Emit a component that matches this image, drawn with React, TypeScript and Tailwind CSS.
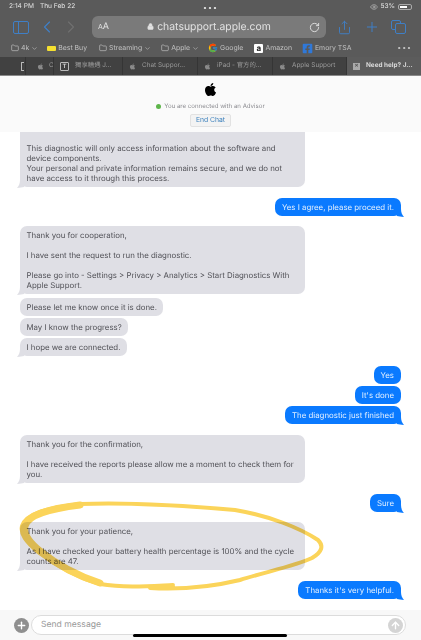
import React from 'react';
import { ChevronLeft, ChevronRight, ChevronDown, Lock, RotateCw, Share, Plus, Folder, ArrowUp, Eye } from 'lucide-react';
import { FaApple, FaFacebookSquare } from 'react-icons/fa';
import { FcGoogle } from 'react-icons/fc';

const sans = "font-['Inter','Noto_Sans_CJK_TC',sans-serif] [text-rendering:geometricPrecision]";

function Tail({ side, color }: { side: 'left' | 'right'; color: string }) {
  return (
    <svg
      width="7"
      height="8"
      viewBox="0 0 7 8"
      className={`absolute bottom-[-1px] ${side === 'left' ? 'left-[-3px] -scale-x-100' : 'right-[-3px]'}`}
      fill={color}
    >
      <path d="M0 0 H4 C4 3 5 6 7 8 C4 8 2 7 0 7 Z" />
    </svg>
  );
}

function Bubble({ lines, tail, className = '' }: { lines: string[]; tail?: boolean; className?: string }) {
  return (
    <div className={`relative rounded-[7px] bg-[#dfdfe5] px-[6.5px] py-1 text-[7.85px] leading-[10px] text-[#505056] ${className}`}>
      {lines.map((l, i) => (
        <div key={i} className="min-h-[10px] whitespace-nowrap">{l}</div>
      ))}
      {tail && <Tail side="left" color="#dfdfe5" />}
    </div>
  );
}

function Mine({ text, tail, className = '' }: { text: string; tail?: boolean; className?: string }) {
  return (
    <div className={`relative ml-auto mr-[20px] w-fit rounded-[7px] bg-[#0a7aff] px-[7px] py-1 text-[7.85px] leading-[10px] text-[#e4f0ff] ${className}`}>
      {text}
      {tail && <Tail side="right" color="#0a7aff" />}
    </div>
  );
}

function Mark({ icon, label, chevron, gap }: { icon: React.ReactNode; label: string; chevron?: boolean; gap: string }) {
  return (
    <div className={`flex items-center gap-[2px] ${gap}`}>
      {icon}
      <span className="whitespace-nowrap">{label}</span>
      {chevron && <ChevronDown size={7} strokeWidth={2} />}
    </div>
  );
}

function Tab({ label, w, icon, active }: { label: string; w: string; icon?: React.ReactNode; active?: boolean }) {
  return (
    <div className={`flex h-full shrink-0 items-center gap-[6px] border-l border-[#353535] pl-[6px] ${w} ${active ? 'bg-[#5c5c5c] font-bold text-[#dadada]' : 'text-[#9a9a9a]'}`}>
      {icon ?? <FaApple size={7} className="shrink-0 text-[#8a8a8a]" />}
      <span className="whitespace-nowrap">{label}</span>
    </div>
  );
}

export default function App() {
  return (
    <div className={`relative h-[640px] w-[421px] overflow-hidden bg-white ${sans}`}>
      <div className="bg-[#5a5a5a]">
        <div className="flex h-[14px] items-center justify-between pl-[9px] pr-[9px] text-[6.6px] text-[#e4e4e4]">
          <div className="flex w-[150px] gap-[6px]">
            <span>2:14 PM</span>
            <span>Thu Feb 22</span>
          </div>
          <span className="text-[7px] leading-none tracking-[1px]">•••</span>
          <div className="flex w-[150px] items-center justify-end gap-[2px]">
            <Eye size={8} className="text-[#bbb]" />
            <span>53%</span>
            <div className="ml-[1px] flex h-[6px] w-[14px] items-center rounded-[2px] border border-[#aaa] p-[1px]">
              <div className="h-full w-[7px] bg-white" />
            </div>
          </div>
        </div>

        <div className="flex h-[26px] items-center pl-[13px] text-[#3f7fc6]">
          <div className="flex h-[13px] w-[16px] rounded-[2px] border-[1.5px] border-[#3f7fc6]">
            <div className="w-[5px] border-r-[1.5px] border-[#3f7fc6]" />
          </div>
          <ChevronLeft size={20} strokeWidth={1.4} className="ml-[8px]" />
          <ChevronRight size={20} strokeWidth={1.4} className="ml-[4px] text-[#707070]" />
          <div className="ml-[11px] flex h-[22px] w-[234px] items-center rounded-[6px] bg-[#7a7a7a] pl-[6px] pr-[6px] text-[#e2e2e2]">
            <span className="text-[7px]">A<span className="text-[9px]">A</span></span>
            <div className="flex flex-1 items-center justify-center gap-[3px] text-[10.4px]">
              <Lock size={7} fill="currentColor" />
              chatsupport.apple.com
            </div>
            <RotateCw size={11} />
          </div>
          <Share size={15} strokeWidth={1.5} className="ml-[11px]" />
          <Plus size={16} strokeWidth={1.5} className="ml-[12px]" />
          <div className="relative ml-[11px] h-[14px] w-[15px]">
            <div className="absolute left-0 top-0 h-[10px] w-[10px] rounded-[2px] border border-[#3f7fc6]" />
            <div className="absolute bottom-0 right-0 h-[11px] w-[11px] rounded-[2px] border-[1.5px] border-[#3f7fc6] bg-[#5a5a5a]" />
          </div>
        </div>

        <div className="flex h-[17px] items-center pl-[11px] text-[6.9px] text-[#c2c2c2]">
          <Mark gap="" icon={<Folder size={8} />} label="4k" chevron />
          <Mark gap="ml-[9px]" icon={<span className="h-[5px] w-[9px] rounded-[1px] bg-[#f5e030]" />} label="Best Buy" />
          <Mark gap="ml-[12px]" icon={<Folder size={8} />} label="Streaming" chevron />
          <Mark gap="ml-[10px]" icon={<Folder size={8} />} label="Apple" chevron />
          <Mark gap="ml-[9px]" icon={<FcGoogle size={10} />} label="Google" />
          <Mark gap="ml-[11px]" icon={<span className="flex h-[9px] w-[9px] items-center justify-center rounded-[1px] bg-white text-[8px] font-bold leading-none text-[#222]">a</span>} label="Amazon" />
          <Mark gap="ml-[10px]" icon={<FaFacebookSquare size={11} className="text-[#2f78d8]" />} label="Emory TSA" />
          <span className="ml-auto mr-[9px] text-[7px] tracking-[1px]">•••</span>
        </div>

        <div className="flex h-[19px] overflow-hidden border-b border-[#8a8a8a] bg-[#414141] text-[6.4px]">
          <div className="flex w-[25px] shrink-0 items-center justify-end pr-[1px]">
            <span className="h-[9px] w-[3px] rounded-l-[1px] border border-r-0 border-[#bbb]" />
          </div>
          <div className="flex w-[28px] shrink-0 items-center gap-[5px] border-l border-[#353535] pl-[11px] text-[#9a9a9a]">
            <FaApple size={7} className="shrink-0 text-[#8a8a8a]" />
            <span>C</span>
          </div>
          <Tab w="w-[69px]" label="獨享糟遇 J..." icon={<span className="flex h-[9px] w-[9px] shrink-0 items-center justify-center rounded-[1px] border border-[#bbb] text-[6px] font-bold text-[#ccc]">T</span>} />
          <Tab w="w-[75px]" label="Chat Suppor..." />
          <Tab w="w-[75px]" label="iPad - 官方的..." />
          <Tab w="w-[74px]" label="Apple Support" />
          <Tab w="w-[75px]" label="Need help? J..." active icon={<span className="flex h-[7px] w-[7px] shrink-0 items-center justify-center bg-[#aaa] text-[6px] leading-none text-[#555]">×</span>} />
        </div>
      </div>

      <div className="flex h-[56px] flex-col items-center bg-[#fafafa] pt-[6px] text-[6.1px] text-[#8a8a8f]">
        <FaApple size={15} className="text-black" />
        <div className="mt-[5px] flex items-center gap-[3px] leading-[9px]">
          <span className="h-[5px] w-[5px] rounded-full bg-[#5db54a]" />
          You are connected with an Advisor
        </div>
        <button className="mt-[3px] h-[13px] w-[41px] rounded-[2px] border border-[#e2e2e2] bg-[#f3f3f3] text-[6.8px] leading-none text-[#3c80bd]">
          End Chat
        </button>
      </div>

      <div className="flex flex-col">
        <Bubble tail className="ml-[20px] w-[285px] rounded-t-none !pt-[1px]" lines={['', 'This diagnostic will only access information about the software and', 'device components.', 'Your personal and private information remains secure, and we do not', 'have access to it through this process.']} />
        <Mine tail className="mt-[11px]" text="Yes I agree, please proceed it." />
        <Bubble tail className="ml-[20px] mt-[10px] w-[285px]" lines={['Thank you for cooperation,', '', 'I have sent the request to run the diagnostic.', '', 'Please go into - Settings > Privacy > Analytics > Start Diagnostics With', 'Apple Support.']} />
        <Bubble className="ml-[20px] mt-[4px] w-fit" lines={['Please let me know once it is done.']} />
        <Bubble className="ml-[20px] mt-[2px] w-fit" lines={['May I know the progress?']} />
        <Bubble tail className="ml-[20px] mt-[2px] w-fit" lines={['I hope we are connected.']} />
        <Mine className="mt-[10px]" text="Yes" />
        <Mine className="mt-[2px]" text="It's done" />
        <Mine tail className="mt-[2px]" text="The diagnostic just finished" />
        <Bubble tail className="ml-[20px] mt-[11px] w-[285px]" lines={['Thank you for the confirmation,', '', 'I have received the reports please allow me a moment to check them for', 'you.']} />
        <Mine tail className="mt-[11px]" text="Sure" />
        <Bubble tail className="ml-[20px] mt-[10px] w-[285px]" lines={['Thank you for your patience,', '', 'As I have checked your battery health percentage is 100% and the cycle', 'counts are 47.']} />
        <Mine tail className="mt-[11px]" text="Thanks it's very helpful." />
      </div>

      {/* highlighter circle drawn over the screenshot */}
      <svg className="absolute left-0 top-[480px] mix-blend-multiply" width="421" height="130" viewBox="0 0 421 130" fill="none">
        <path
          d="M173 105 C150 106 125 108 100 104 C78 98 55 85 38 72 C26 62 20 54 22 46 C26 34 46 28 80 24 C130 22 190 26 235 30 C270 36 300 48 318 60 C324 66 322 72 312 78 C295 86 265 92 240 100 C215 106 185 110 150 108"
          stroke="#fbd45a"
          strokeWidth="4"
          strokeLinecap="round"
        />
        <path d="M80 25 C48 29 28 35 25 46 C23 54 29 62 40 71 C56 84 78 96 100 103" stroke="#fbd45a" strokeWidth="7" strokeLinecap="round" />
      </svg>

      <div className="absolute inset-x-0 bottom-0 flex h-[30px] items-center gap-[2px] bg-[#f8f8f8] pl-[14px] pr-[15px]">
        <div className="flex h-[15px] w-[15px] shrink-0 items-center justify-center rounded-full bg-[#8f8f8f] text-white">
          <Plus size={11} strokeWidth={3} />
        </div>
        <div className="flex h-[20px] flex-1 items-center justify-between rounded-[10px] border border-[#dcdcdc] bg-white pl-[9px] pr-[2px] pt-[1px] text-[8.6px] text-[#999]">
          Send message
          <div className="flex h-[15px] w-[15px] items-center justify-center rounded-full bg-[#d4d4d4] text-white">
            <ArrowUp size={11} strokeWidth={3} />
          </div>
        </div>
      </div>
      <div className="absolute bottom-[3px] left-[133px] h-[3px] w-[154px] rounded-full bg-black" />
    </div>
  );
}
